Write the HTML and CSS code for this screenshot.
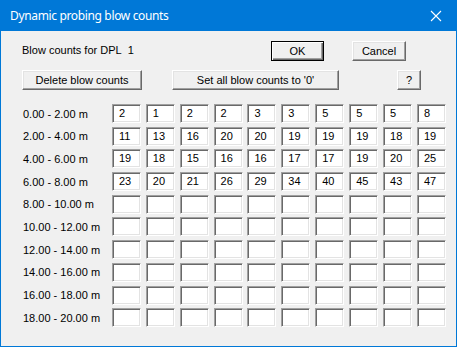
FILE: index.html
```html
<!DOCTYPE html>
<html lang="en">
  <head>
    <meta charset="utf-8">
    <title>Dynamic probing blow counts</title>
    <link rel="stylesheet" href="styles.css">
  </head>
  <body>
    <div class="window">
      <div class="titlebar">
        <span class="title">Dynamic probing blow counts</span>
        <svg class="close" width="12" height="12" viewBox="0 0 12 12">
          <path d="M1 1 L11 11 M11 1 L1 11" stroke="#fff" stroke-width="1.1" fill="none"/>
        </svg>
      </div>
      <div class="client">
        <div class="top-row">
          <span class="caption">Blow counts for DPL&nbsp; 1</span>
          <button class="btn btn-ok default">OK</button>
          <button class="btn btn-cancel">Cancel</button>
        </div>
        <div class="tool-row">
          <button class="btn btn-delete">Delete blow counts</button>
          <button class="btn btn-setall">Set all blow counts to '0'</button>
          <button class="btn btn-help">?</button>
        </div>
        <div class="counts" id="counts"></div>
      </div>
    </div>
    <script>
      const values = [
        [2, 1, 2, 2, 3, 3, 5, 5, 5, 8],
        [11, 13, 16, 20, 20, 19, 19, 19, 18, 19],
        [19, 18, 15, 16, 16, 17, 17, 19, 20, 25],
        [23, 20, 21, 26, 29, 34, 40, 45, 43, 47]
      ];
      const grid = document.getElementById('counts');
      for (let r = 0; r < 10; r++) {
        const from = (r * 2).toFixed(2);
        const to = (r * 2 + 2).toFixed(2);
        const label = document.createElement('div');
        label.className = 'depth';
        label.textContent = from + ' - ' + to + ' m';
        grid.appendChild(label);
        for (let c = 0; c < 10; c++) {
          const cell = document.createElement('div');
          cell.className = 'cell';
          cell.textContent = values[r] ? values[r][c] : '';
          grid.appendChild(cell);
        }
      }
    </script>
  </body>
</html>
```

FILE: styles.css
```css
body {
  margin: 0;
  font-family: "Liberation Sans", Arial, sans-serif;
  font-size: 11px;
  color: #000;
}

.window {
  width: 457px;
  height: 347px;
  box-sizing: border-box;
  border: 1px solid #0078d7;
  border-top: none;
  background: #f0f0f0;
  display: flex;
  flex-direction: column;
}

.titlebar {
  height: 31px;
  margin: 0 -1px;
  background: #0078d7;
  color: #fff;
  display: flex;
  align-items: center;
  padding: 0 10px 1px 10px;
  box-sizing: border-box;
}

.title {
  font-family: "Noto Sans", "Open Sans", sans-serif;
  font-size: 12px;
  flex: 1;
  letter-spacing: -0.35px;
}

.close {
  margin-right: 5px;
  margin-top: 1px;
}

.client {
  padding: 10px 0 0 21px;
}

.top-row,
.tool-row {
  display: flex;
  align-items: center;
  height: 20px;
}

.tool-row {
  margin-top: 9px;
}

.caption {
  width: 249px;
  padding-bottom: 2px;
}

.btn {
  height: 20px;
  box-sizing: border-box;
  background: #f0f0f0;
  border: 1px solid;
  border-color: #fff #696969 #696969 #fff;
  box-shadow: inset -1px -1px 0 #a0a0a0, inset 1px 1px 0 #e3e3e3;
  font-family: "Liberation Sans", Arial, sans-serif;
  font-size: 11px;
  color: #000;
  padding: 0;
  cursor: pointer;
}

.btn.default {
  border-color: #000;
  box-shadow: inset 1px 1px 0 #fff, inset -1px -1px 0 #696969, inset -2px -2px 0 #a0a0a0;
}

.btn-ok { width: 53px; }
.btn-cancel { width: 54px; margin-left: 28px; }
.btn-delete { width: 120px; }
.btn-setall { width: 167px; margin-left: 30px; }
.btn-help { width: 24px; margin-left: 58px; }

.counts {
  display: grid;
  grid-template-columns: 85px repeat(10, 29px);
  grid-auto-rows: 19px;
  column-gap: 4.9px;
  row-gap: 3.7px;
  margin-top: 14px;
}

.depth {
  display: flex;
  align-items: center;
  padding-left: 1px;
  white-space: nowrap;
}

.cell {
  box-sizing: border-box;
  background: #fff;
  border: 1px solid;
  border-color: #a0a0a0 #fff #fff #a0a0a0;
  box-shadow: inset 1px 1px 0 #696969, inset -1px -1px 0 #e3e3e3;
  padding: 0 0 0 6px;
  line-height: 17px;
  font-size: 11px;
}
```
